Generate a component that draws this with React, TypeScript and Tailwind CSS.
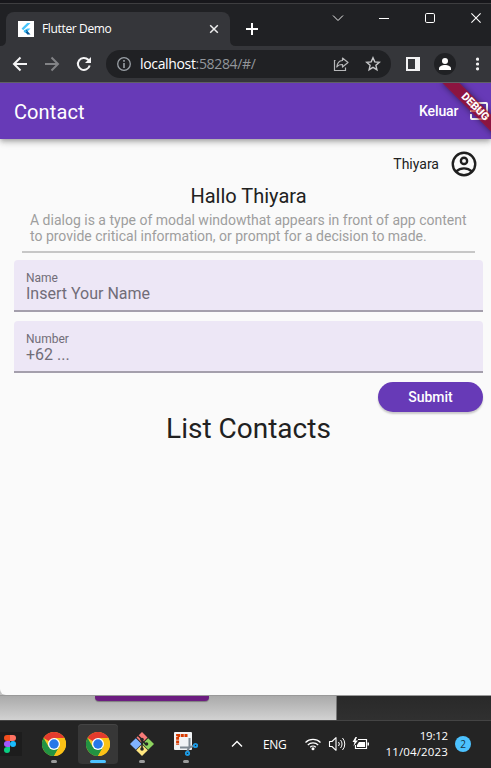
import React from "react";

type IconProps = { w: number; h: number; className?: string; children: React.ReactNode };

function Icon({ w, h, className = "", children }: IconProps) {
  return (
    <svg width={w} height={h} viewBox={`0 0 ${w} ${h}`} fill="none" className={`block shrink-0 ${className}`}>
      {children}
    </svg>
  );
}

function TabStrip() {
  return (
    <div className="flex h-[42px] bg-[#202124] font-['Open_Sans',sans-serif] text-white">
      <div className="relative mt-2 ml-1.5 flex h-[34px] w-[224px] items-center rounded-t-lg bg-[#35363a] pl-3">
        <Icon w={6} h={6} className="absolute bottom-0 -left-1.5"><path d="M6 0v6H0Q6 6 6 0Z" fill="#35363a" /></Icon>
        <Icon w={6} h={6} className="absolute -right-1.5 bottom-0"><path d="M0 0v6h6Q0 6 0 0Z" fill="#35363a" /></Icon>
        <Icon w={16} h={16} className="bg-white">
          <path d="M9.200 2h3.300L5.200 9.200 3.600 7.600Z" fill="#47c5fb" />
          <path d="M9.200 7.500h3.300L8 12 5.600 9.900l1.200-.8Z" fill="#47c5fb" />
          <path d="m6.800 10.300 1.600-1.500 4.100 4.700H9.300Z" fill="#075b9d" />
          <path d="m5.600 10.300 1.600-1.600 1.700 1.600-1.700 1.600Z" fill="#3db5ec" />
        </Icon>
        <span className="ml-2 w-[167px] text-xs leading-4 tracking-[-0.35px] whitespace-nowrap">Flutter Demo</span>
        <Icon w={10} h={10}><path d="m1.200 1.200 7.600 7.600m0-7.600L1.200 8.800" stroke="#eee" strokeWidth="1.500" /></Icon>
      </div>
      <Icon w={12} h={12} className="mt-[19px] ml-4"><path d="M6 0v12M0 6h12" stroke="#fff" strokeWidth="2" /></Icon>
      <Icon w={12} h={8} className="mt-[10px] ml-[74px]"><path d="m1 1.500 5 5 5-5" stroke="#eee" /></Icon>
      <Icon w={10} h={10} className="mt-[9px] ml-[35px]"><path d="M0 5.500h10" stroke="#fff" /></Icon>
      <Icon w={10} h={10} className="mt-[9px] ml-9"><rect x=".5" y=".5" width="9" height="9" rx="1.300" stroke="#fff" /></Icon>
      <Icon w={10} h={10} className="mt-[9px] ml-9"><path d="m.4.4 9.200 9.200m0-9.200L.4 9.600" stroke="#fff" strokeWidth="1.100" /></Icon>
    </div>
  );
}

function Toolbar() {
  return (
    <div className="flex h-9 items-center bg-[#35363a] pl-3">
      <Icon w={16} h={16}><path d="M15 8H2m6.500-6.500L2 8l6.500 6.500" stroke="#f4f4f5" strokeWidth="2" /></Icon>
      <Icon w={16} h={16} className="ml-4"><path d="M1 8h13M7.500 1.500 14 8l-6.500 6.500" stroke="#828386" strokeWidth="2" /></Icon>
      <Icon w={16} h={16} className="ml-4"><path d="M13.700 9.500A6 6 0 1 1 12.300 3.800L14 5.500" stroke="#f4f4f5" strokeWidth="2" /><path d="M15 1v6H9Z" fill="#f4f4f5" /></Icon>
      <div className="ml-[14px] flex h-7 w-[285px] items-center rounded-full bg-[#202124] pl-[11px]">
        <Icon w={14} h={14}><circle cx="7" cy="7" r="6.300" stroke="#9aa0a6" strokeWidth="1.300" /><path d="M7 6v5M7 3v1.700" stroke="#9aa0a6" strokeWidth="1.600" /></Icon>
        <span className="ml-[9px] w-[193px] font-['Open_Sans',sans-serif] text-[14px] leading-5 tracking-[-0.34px] whitespace-nowrap text-white">
          localhost<span className="text-[#92969b]">:58284/#/</span>
        </span>
        <Icon w={16} h={16}>
          <path d="M2.500 4.500h-1v10h11v-3" stroke="#b7b8ba" strokeWidth="1.200" />
          <path d="M9.500 2 15 6.500l-5.500 4.500V8.500C6.500 8.400 4.800 9.300 3.800 11c.3-3.300 2-6.200 5.700-6.500Z" stroke="#b7b8ba" strokeWidth="1.200" strokeLinejoin="round" />
        </Icon>
        <Icon w={16} h={16} className="ml-4"><path d="m8 1.800 1.800 4.100 4.500.4-3.400 3 1 4.400L8 11.300l-3.900 2.400 1-4.400-3.400-3 4.500-.4Z" stroke="#c6c7c9" strokeWidth="1.400" /></Icon>
      </div>
      <Icon w={14} h={14} className="ml-[15px]"><path d="M0 0h14v14H0ZM2 2v10h7V2Z" fill="#f2f2f3" fillRule="evenodd" /></Icon>
      <Icon w={22} h={22} className="ml-3.5">
        <circle cx="11" cy="11" r="11" fill="#202124" />
        <circle cx="11" cy="8" r="3" fill="#fff" />
        <path d="M5 17v-1.500c0-2 3-3.500 6-3.500s6 1.500 6 3.500V17Z" fill="#fff" />
      </Icon>
      <Icon w={4} h={14} className="ml-[19px]"><circle cx="2.500" cy="2.200" r="1.600" fill="#f1f1f1" /><circle cx="2.500" cy="7" r="1.600" fill="#f1f1f1" /><circle cx="2.500" cy="11.800" r="1.600" fill="#f1f1f1" /></Icon>
    </div>
  );
}

function AppBar() {
  return (
    <header className="relative z-10 flex h-14 items-center bg-[#673ab7] pl-3.5 text-white shadow-[0_2px_4px_-1px_rgba(0,0,0,0.2),0_4px_5px_rgba(0,0,0,0.14),0_1px_10px_rgba(0,0,0,0.12)] [clip-path:inset(0_0_-12px_0)]">
      <h1 className="w-[405px] pt-px text-xl leading-6 font-normal tracking-[0.1px]">Contact</h1>
      <span className="w-12 text-sm leading-4 font-medium tracking-[-0.1px]">Keluar</span>
      <Icon w={24} h={24}>
        <path d="M10.090 15.590 11.500 17l5-5-5-5-1.410 1.410L12.670 11H3v2h9.670l-2.580 2.590ZM19 3H5a2 2 0 0 0-2 2v4h2V5h14v14H5v-4H3v4a2 2 0 0 0 2 2h14a2 2 0 0 0 2-2V5a2 2 0 0 0-2-2Z" fill="#fff" />
      </Icon>
      <div className="absolute top-0 right-0 h-14 w-14 overflow-hidden">
        <div className="absolute top-[18px] left-0 h-3 w-20 rotate-45 bg-[#a00000]/65 text-center text-[10.800px] leading-3 font-extrabold text-white shadow-[0_0_6px_rgba(0,0,0,0.5)]">DEBUG</div>
      </div>
    </header>
  );
}

function Field({ label, hint }: { label: string; hint: string }) {
  return (
    <div className="h-[52px] rounded-t border-b-2 border-[#a49fac] bg-[#ede7f6] px-3 pt-2.5 text-[#716d78]">
      <div className="text-xs leading-4">{label}</div>
      <div className="text-base leading-4">{hint}</div>
    </div>
  );
}

function ContactPage() {
  return (
    <main className="h-[556px] rounded-bl-md bg-[#fafafa] pt-[11px] pr-2 pl-3.5 text-[#212121]">
      <div className="flex h-7 items-center justify-end pr-1">
        <span className="text-sm leading-4">Thiyara</span>
        <svg viewBox="0 0 24 24" className="ml-2.5 block size-[30px]" fill="none" stroke="#1f1f1f" strokeWidth="1.900">
          <circle cx="12" cy="12" r="9" /><circle cx="12" cy="9.500" r="2.500" />
          <path d="M5.600 18c1.800-1.600 4-2.500 6.400-2.500s4.600.9 6.400 2.500" />
        </svg>
      </div>
      <h2 className="mt-1.5 text-center text-xl leading-6">Hallo Thiyara</h2>
      <p className="mt-1 ml-4 text-sm leading-4 whitespace-nowrap text-[#9e9e9e]">
        A dialog is a type of modal windowthat appears in front of app content
        <br />
        to provide critical information, or prompt for a decision to made.
      </p>
      <div className="mx-2 mt-[7px] h-0.5 bg-[#c7c7c7]" />
      <div className="mt-[7px] flex flex-col gap-[9px]">
        <Field label="Name" hint="Insert Your Name" />
        <Field label="Number" hint="+62 ..." />
      </div>
      <button className="mt-[9px] ml-auto block h-[30px] w-[105px] rounded-full bg-[#673ab7] text-sm leading-4 font-medium tracking-[-0.05px] text-white shadow-[0_2px_2px_rgba(0,0,0,0.2)]">Submit</button>
      <h3 className="mt-px text-center text-[28px] leading-8">List Contacts</h3>
    </main>
  );
}

function Chrome() {
  return (
    <svg viewBox="0 0 48 48" className="block size-6">
      <circle cx="24" cy="24" r="24" fill="#f7c921" />
      <path d="M24 24 3.200 12A24 24 0 0 1 44.800 12H24Z" fill="#e33b2e" />
      <path d="M3.200 12A24 24 0 0 0 24 48l10.400-18L24 24 13.600 30Z" fill="#229342" />
      <path d="M44.800 12H24v12l10.400 6L24 48A24 24 0 0 0 44.800 12Z" fill="#fbc116" />
      <circle cx="24" cy="24" r="12" fill="#fff" /><circle cx="24" cy="24" r="9.500" fill="#2878e8" />
    </svg>
  );
}

function TaskButton({ active = false, children }: { active?: boolean; children: React.ReactNode }) {
  return (
    <div className={`flex h-10 w-10 flex-col items-center rounded pt-2 ${active ? "bg-[#373737] shadow-[inset_0_1px_0_#444]" : ""}`}>
      {children}
      <div className={`mt-1 h-[3px] rounded-full ${active ? "w-4 bg-[#4cc2ff]" : "w-1.5 bg-[#9c9c9c]"}`} />
    </div>
  );
}

function Taskbar() {
  return (
    <footer className="flex h-12 border-t border-[#444] bg-[#242424] pt-[3px] font-['Open_Sans',sans-serif] text-white">
      <div className="mt-2 flex h-6 w-[22px] bg-[#1d1d1d] pt-[3px] pl-1">
        <Icon w={12} h={18}>
          <path d="M3 0h3v6H3a3 3 0 0 1 0-6Z" fill="#f24e1e" /><path d="M6 0h3a3 3 0 0 1 0 6H6Z" fill="#ff7262" />
          <path d="M3 6h3v6H3a3 3 0 0 1 0-6Z" fill="#a259ff" /><circle cx="9" cy="9" r="3" fill="#1abcfe" />
          <path d="M3 12h3v3a3 3 0 1 1-3-3Z" fill="#0acf83" />
        </Icon>
      </div>
      <div className="ml-3 flex gap-1">
        <TaskButton><Chrome /></TaskButton>
        <TaskButton active><Chrome /></TaskButton>
        <TaskButton>
          <Icon w={24} h={24}>
            <path d="m12 0 5.500 5.500L12 11 6.500 5.500Z" fill="#f77b78" /><path d="m5.800 6.200 5.800 5.800-5.800 5.800L0 12Z" fill="#80b3ff" />
            <path d="m18.200 6.200 5.800 5.800-5.800 5.800-5.800-5.800Z" fill="#8dd35f" /><path d="m12 12.400 5.800 5.800L12 24l-5.800-5.800Z" fill="#ffe680" />
            <path d="m8 3.500 4 4v10m0-9 4 4" stroke="#252525" strokeWidth="1.500" />
            <circle cx="12" cy="7.500" r="1.800" fill="#252525" /><circle cx="12" cy="17" r="1.800" fill="#252525" /><circle cx="16.500" cy="12" r="1.800" fill="#252525" />
          </Icon>
        </TaskButton>
        <TaskButton>
          <Icon w={24} h={24}>
            <rect x="0" y="0" width="18" height="18" rx="1" fill="#f1f3f5" />
            <path d="M13.500 3.600H3.600V13" stroke="#d83b01" strokeWidth="3" strokeDasharray="3 .7" />
            <path d="M15.500 6v8.500L13 20M6 15.500h9.500l5-2" stroke="#7f8992" strokeWidth="2" />
            <circle cx="21.500" cy="13.500" r="1.700" stroke="#1c9be6" strokeWidth="1.800" /><circle cx="13.500" cy="21.300" r="1.700" stroke="#1c9be6" strokeWidth="1.800" />
          </Icon>
        </TaskButton>
      </div>
      <div className="ml-[25px] flex h-10 items-center">
        <Icon w={12} h={8}><path d="m1 6.500 5-5 5 5" stroke="#fff" strokeWidth="1.400" /></Icon>
        <span className="ml-5 w-[41px] pt-0.5 text-[12px] leading-4 tracking-[-0.4px]">ENG</span>
        <Icon w={18} h={14} className="mr-[6px]">
          <path d="M1.500 5.500a10.500 10.500 0 0 1 15 0M3.800 8a7.300 7.300 0 0 1 10.400 0M6.200 10.300a4 4 0 0 1 5.600 0" stroke="#fff" strokeWidth="1.200" />
          <circle cx="9" cy="11.700" r="1.500" fill="#fff" />
        </Icon>
        <Icon w={18} h={16} className="mr-[6px]">
          <path d="M1.500 5.500H4l4-3.800v12.600l-4-3.800H1.500Z" stroke="#fff" strokeWidth="1.100" strokeLinejoin="round" />
          <path d="M10.500 6a3 3 0 0 1 0 4M12.500 4a6 6 0 0 1 0 8M14.500 2a9 9 0 0 1 0 12" stroke="#fff" />
        </Icon>
        <Icon w={18} h={14}>
          <path d="M6 2.500h8.500v9H3.500V8" stroke="#fff" strokeWidth="1.200" /><path d="M7 5h6v5H5V8Z" fill="#fff" />
          <path d="M15.500 5.500h1.500v3h-1.500Z" fill="#fff" /><path d="m3.500 0-3 5h2l-1 4L6 3.500H3.500L5 0Z" fill="#fff" />
        </Icon>
        <div className="w-[78px] text-right text-[11.500px] leading-4 tracking-[0.1px] whitespace-nowrap">
          <div className="tracking-[-0.2px]">19:12</div><div className="tracking-[0.15px]">11/04/2023</div>
        </div>
        <div className="ml-[7px] size-4 rounded-full bg-[#4cc2ff] text-center text-[10px] leading-4 text-[#173445]">2</div>
      </div>
    </footer>
  );
}

export default function App() {
  return (
    <div className="h-[768px] w-[491px] overflow-hidden bg-[#c2c2c2] font-['Roboto',sans-serif]">
      <div className="h-1 border-b border-[#3e3e40] bg-[#17171b]" />
      <TabStrip />
      <Toolbar />
      <div className="h-px bg-[#606064]" />
      <AppBar />
      <ContactPage />
      <div className="flex h-[25px] border-t border-[#999]">
        <div className="w-[337px] border-r border-[#777] bg-linear-to-b from-[#aaa] to-[#d2d2d2] pl-[95px]">
          <div className="h-[5px] w-[114px] rounded-b bg-[#6c1c80] shadow-[0_1px_1px_rgba(0,0,0,0.3)]" />
        </div>
        <div className="flex-1 bg-linear-to-b from-[#292929] to-[#303030]" />
      </div>
      <Taskbar />
    </div>
  );
}
